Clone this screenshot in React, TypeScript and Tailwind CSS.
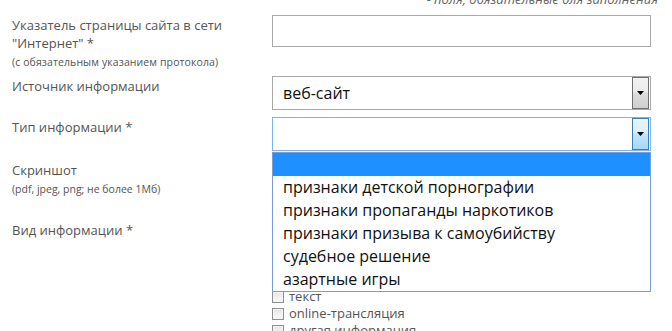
import React from "react";

const options = [
  "",
  "признаки детской порнографии",
  "признаки пропаганды наркотиков",
  "признаки призыва к самоубийству",
  "судебное решение",
  "азартные игры",
];

// the first items of this list sit under the open dropdown
const kinds = ["текст", "online-трансляция", "другая информация"];

const SelectArrow = ({ focused }: { focused?: boolean }) => (
  <span
    className={`flex h-full w-[17px] items-center justify-center border ${
      focused
        ? "border-[#3c7fb1] bg-[linear-gradient(to_bottom,#eaf6fd_0%,#d9f0fc_45%,#bee6fd_50%,#a7d9f5_100%)]"
        : "border-[#707070] bg-[linear-gradient(to_bottom,#f2f2f2_0%,#ebebeb_45%,#dddddd_50%,#cfcfcf_100%)]"
    }`}
  >
    <svg width="7" height="4" viewBox="0 0 7 4">
      <path d="M0 0h7L3.5 4z" fill="#000" />
    </svg>
  </span>
);

const Select = ({ value, focused }: { value: string; focused?: boolean }) => (
  <div
    className={`flex h-[34px] w-[379px] items-center border bg-white pr-px ${
      focused ? "border-[#7eb4ea]" : "border-[#a9a9a9]"
    }`}
  >
    <span className="flex-1 pl-[10px] text-[16px] leading-[20px] text-[#111]">{value}</span>
    <div className="h-[32px]">
      <SelectArrow focused={focused} />
    </div>
  </div>
);

export default function App() {
  return (
    <div className="relative h-[331px] w-[672px] overflow-hidden bg-white font-['Open_Sans',sans-serif] text-[13px] text-[#555]">
      <p className="-mt-[9px] h-[15px] pr-[14px] text-right text-[13px] italic leading-[16px] text-[#666]">
        - поля, обязательные для заполнения
      </p>

      <div className="mt-[9px] flex h-[61px]">
        <div className="w-[272px] pl-3 pt-px">
          <p className="leading-[18px]">Указатель страницы сайта в сети</p>
          <p className="leading-[18px]">"Интернет" *</p>
          <p className="mt-px text-[10.5px] leading-[18px] tracking-[0.1px]">(с обязательным указанием протокола)</p>
        </div>
        <div className="h-[32px] w-[379px] border border-[#a9a9a9] bg-white" />
      </div>

      <div className="flex h-[41px]">
        <div className="w-[272px] pl-3 pt-px leading-[18px]">Источник информации</div>
        <Select value="веб-сайт" />
      </div>

      <div className="flex h-[44px]">
        <div className="w-[272px] pl-3 pt-px leading-[18px]">Тип информации *</div>
        <Select value="" focused />
      </div>

      <div className="flex h-[60px]">
        <div className="w-[272px] pl-3">
          <p className="leading-[18px]">Скриншот</p>
          <p className="mt-px text-[10.5px] leading-[18px]">(pdf, jpeg, png; не более 1Мб)</p>
        </div>
      </div>

      <div className="flex">
        <div className="w-[272px] pl-3 leading-[18px]">Вид информации *</div>
        <div className="mt-[67px] flex flex-col">
          {kinds.map((k) => (
            <label key={k} className="flex h-[17px] items-center gap-[5px] leading-[17px]">
              <span className="h-[12px] w-[12px] border border-[#8f8f8f] bg-[linear-gradient(to_bottom,#e6e6e6,#fafafa)] shadow-[inset_0_0_0_1px_#f4f4f4]" />
              <span>{k}</span>
            </label>
          ))}
        </div>
      </div>

      <ul className="absolute left-[272px] top-[152px] w-[379px] border border-[#7a9cd6] bg-white">
        {options.map((o, i) => (
          <li
            key={i}
            className={`h-[23px] pl-[10px] text-[16px] leading-[23px] text-[#111] ${
              i === 0 ? "bg-[#1e90ff]" : ""
            }`}
          >
            {o}
          </li>
        ))}
      </ul>
    </div>
  );
}
